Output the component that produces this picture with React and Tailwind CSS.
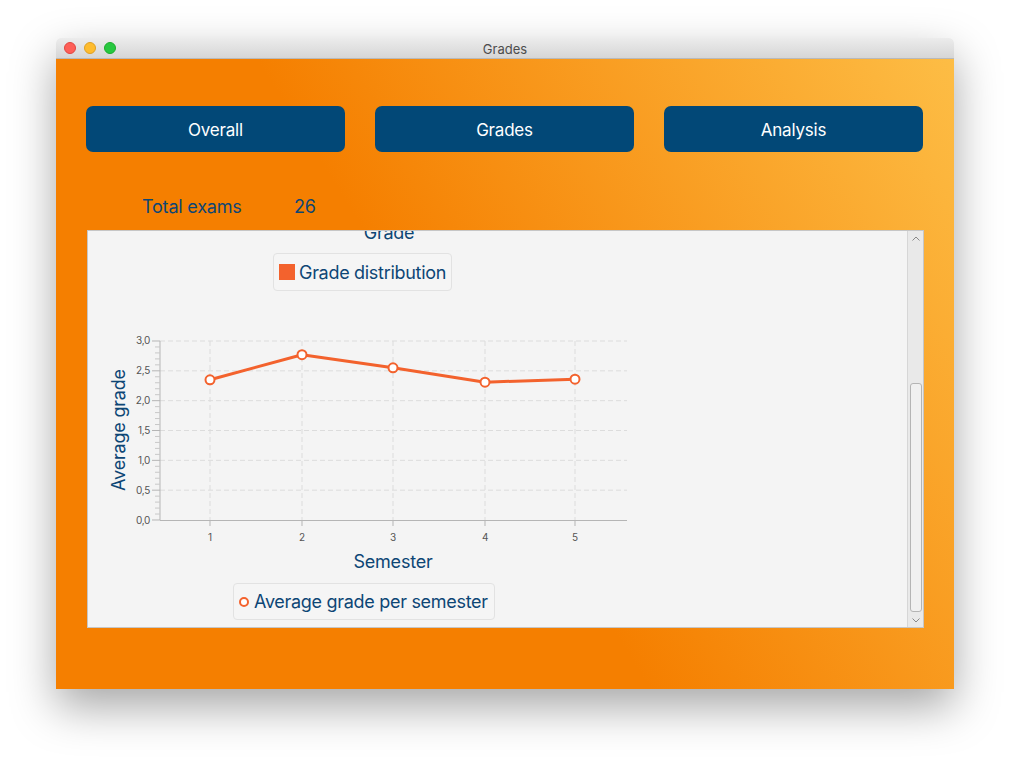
import React from "react";

const SERIES = "#f3622d";
const points = [
  { x: 122, v: 2.35 },
  { x: 214, v: 2.77 },
  { x: 305, v: 2.55 },
  { x: 397, v: 2.31 },
  { x: 487, v: 2.36 },
];
const yOf = (v) => 190 - v * 59.67;

function LineChart() {
  const majors = [0, 0.5, 1, 1.5, 2, 2.5, 3];
  const minors = [];
  for (let i = 0; i <= 30; i++) if (i % 5 !== 0) minors.push(i / 10);
  const path = points.map((p, i) => `${i ? "L" : "M"}${p.x} ${yOf(p.v)}`).join(" ");
  return (
    <svg width="600" height="245" className="block">
      {/* grid */}
      {majors.slice(1).map((v) => (
        <line key={"h" + v} x1="72" x2="539" y1={yOf(v)} y2={yOf(v)} stroke="#dcdcdc" strokeDasharray="5 3" />
      ))}
      {points.map((p) => (
        <line key={"v" + p.x} x1={p.x} x2={p.x} y1="11" y2="190" stroke="#dcdcdc" strokeDasharray="5 3" />
      ))}
      {/* axes */}
      <line x1="72" x2="72" y1="11" y2="190" stroke="#b5b5b5" />
      <line x1="72" x2="539" y1="190.5" y2="190.5" stroke="#b5b5b5" />
      {majors.map((v) => (
        <line key={"mt" + v} x1="64" x2="72" y1={yOf(v)} y2={yOf(v)} stroke="#b5b5b5" />
      ))}
      {minors.map((v) => (
        <line key={"mn" + v} x1="67" x2="72" y1={yOf(v)} y2={yOf(v)} stroke="#c8c8c8" />
      ))}
      {points.map((p) => (
        <line key={"xt" + p.x} x1={p.x} x2={p.x} y1="190" y2="196" stroke="#b5b5b5" />
      ))}
      {majors.map((v) => (
        <text key={"yl" + v} x="62" y={yOf(v) + 3.5} textAnchor="end" fontSize="10" fill="#555" fontFamily="Inter, sans-serif">
          {v.toFixed(1).replace(".", ",")}
        </text>
      ))}
      {points.map((p, i) => (
        <text key={"xl" + p.x} x={p.x} y="211" textAnchor="middle" fontSize="10" fill="#555" fontFamily="Inter, sans-serif">
          {i + 1}
        </text>
      ))}
      {/* series */}
      <path d={path} fill="none" stroke={SERIES} strokeWidth="3" strokeLinejoin="round" />
      {points.map((p) => (
        <circle key={"c" + p.x} cx={p.x} cy={yOf(p.v)} r="4.5" fill="#fff" stroke={SERIES} strokeWidth="2" />
      ))}
      {/* axis titles */}
      <text x="30" y="100" transform="rotate(-90 30 100)" textAnchor="middle" dominantBaseline="central" fontSize="18" letterSpacing="-0.2" fill="#0d4675" fontFamily="Inter, sans-serif">
        Average grade
      </text>
      <text x="305" y="231" textAnchor="middle" dominantBaseline="central" fontSize="18" letterSpacing="-0.2" fill="#0d4675" fontFamily="Inter, sans-serif">
        Semester
      </text>
    </svg>
  );
}

function ScrollBar() {
  return (
    <div className="w-[16px] h-full flex flex-col items-center bg-[#e9e9e9] border-l border-[#d6d6d6]">
      <div className="h-[14px] flex items-center justify-center">
        <svg width="8" height="5"><path d="M0.5 4.5 L4 1 L7.5 4.5" fill="none" stroke="#888" /></svg>
      </div>
      <div className="h-[138px]" />
      <div className="w-[12px] h-[229px] rounded-[3px] bg-[#f0f0f0] border border-[#b4b4b4]" />
      <div className="flex-1" />
      <div className="h-[14px] flex items-center justify-center">
        <svg width="8" height="5"><path d="M0.5 0.5 L4 4 L7.5 0.5" fill="none" stroke="#888" /></svg>
      </div>
    </div>
  );
}

export default function App() {
  return (
    <div className="w-[1010px] h-[763px] bg-white overflow-hidden" style={{ fontFamily: "Inter, 'Liberation Sans', sans-serif" }}>
      <div className="ml-[56px] mt-[38px] w-[898px] h-[651px] rounded-t-[5px] shadow-[0_18px_45px_rgba(0,0,0,0.35)] flex flex-col">
        {/* title bar */}
        <div className="h-[21px] rounded-t-[5px] bg-gradient-to-b from-[#ececec] to-[#d6d6d6] border-b border-[#b9b9b9] flex items-center relative">
          <div className="flex gap-[8px] pl-[8px]">
            <span className="w-[12px] h-[12px] rounded-full bg-[#fe5f57] border border-[#e14640]" />
            <span className="w-[12px] h-[12px] rounded-full bg-[#febc2e] border border-[#dfa023]" />
            <span className="w-[12px] h-[12px] rounded-full bg-[#28c840] border border-[#1dad2b]" />
          </div>
          <div className="absolute inset-0 pt-[3px] flex items-center justify-center text-[13px] text-[#4d4d4d]">Grades</div>
        </div>

        {/* content */}
        <div className="flex-1 bg-[linear-gradient(58deg,#f57f00_46%,#fdbd45_100%)]">
          <div className="grid grid-cols-3 gap-[30px] pl-[30px] pr-[31px] pt-[47px]">
            {["Overall", "Grades", "Analysis"].map((t) => (
              <div key={t} className="h-[46px] pt-[3px] rounded-[7px] bg-[#024877] flex items-center justify-center text-white text-[17px] tracking-[-0.2px]">
                {t}
              </div>
            ))}
          </div>

          <div className="flex pl-[86px] pt-[44px] h-[65px] text-[18px] leading-[22px] text-[#0d4675] tracking-[-0.2px]">
            <span className="w-[152px]">Total exams</span>
            <span>26</span>
          </div>

          <div className="ml-[31px] mt-[13px] w-[837px] h-[398px] border border-[#c6c6c6] bg-[#f4f4f4] flex">
            <div className="flex-1 overflow-hidden flex flex-col items-start text-[#0d4675] tracking-[-0.3px]">
              <div className="-mt-[9px] w-[602px] h-[22px] leading-[22px] text-center text-[18px]">Grade</div>
              <div className="mt-[9px] ml-[185px] h-[38px] px-[5px] flex items-center gap-[4px] rounded-[4px] border border-[#e2e2e2] bg-[#f5f5f5] text-[18px]">
                <span className="w-[16px] h-[16px] bg-[#f3622d]" />
                <span>Grade distribution</span>
              </div>
              <div className="mt-[39px]">
                <LineChart />
              </div>
              <div className="mt-[8px] ml-[145px] h-[37px] pl-[5px] pr-[6px] flex items-center gap-[5px] rounded-[4px] border border-[#e2e2e2] bg-[#f5f5f5] text-[18px]">
                <span className="w-[10px] h-[10px] rounded-full border-2 border-[#f3622d] bg-white" />
                <span>Average grade per semester</span>
              </div>
            </div>
            <ScrollBar />
          </div>
        </div>
      </div>
    </div>
  );
}
